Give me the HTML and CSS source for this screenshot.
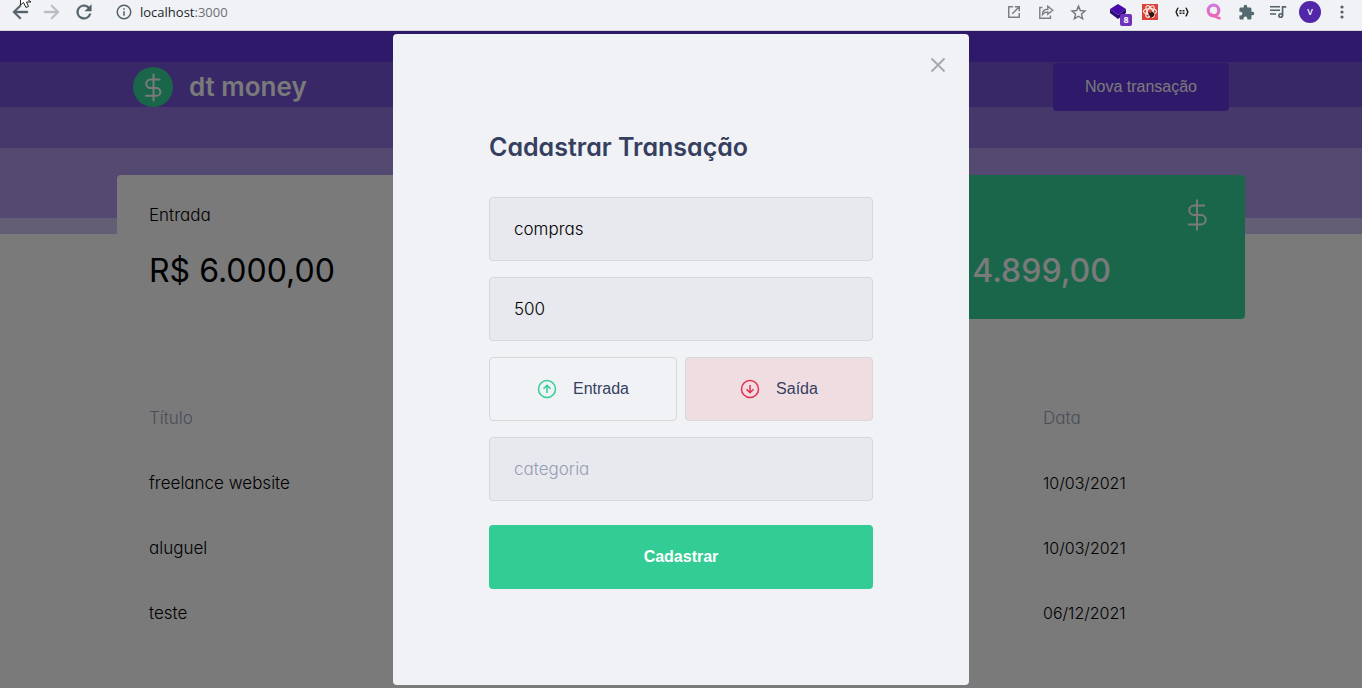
FILE: index.html
```html
<!DOCTYPE html>
<html lang="pt-BR">
<head>
<meta charset="utf-8">
<title>dt money</title>
<link rel="stylesheet" href="styles.css">
</head>
<body>
<div class="browser-bar">
  <div class="nav-tools">
    <button class="tool" aria-label="Voltar"><svg width="24" height="24" viewBox="0 0 24 24"><path d="M20.500 11H7.800l5.600-5.600L12 4l-8 8 8 8 1.400-1.400L7.800 13h12.700z" fill="#536168" stroke="#536168" stroke-width=".5"/></svg></button>
    <button class="tool" aria-label="Avançar"><svg width="24" height="24" viewBox="0 0 24 24"><path d="M3.500 11h12.700l-5.600-5.600L12 4l8 8-8 8-1.400-1.400 5.600-5.600H3.500z" fill="#b9bcbf" stroke="#b9bcbf" stroke-width=".5"/></svg></button>
    <button class="tool" aria-label="Recarregar"><svg width="22" height="22" viewBox="0 0 24 24"><path d="M17.650 6.350A8 8 0 1 0 19.730 14h-2.080A6 6 0 1 1 12 6c1.660 0 3.140.69 4.220 1.780L13 11h7V4z" fill="#536168" stroke="#536168" stroke-width=".5"/></svg></button>
  </div>
  <div class="address">
    <svg width="18" height="18" viewBox="0 0 24 24"><path d="M11 7h2v2h-2zm0 4h2v6h-2zm1-9a10 10 0 1 0 0 20 10 10 0 0 0 0-20zm0 18a8 8 0 1 1 0-16 8 8 0 0 1 0 16z" fill="#536168"/></svg>
    <span class="url">localhost<span class="port">:3000</span></span>
  </div>
  <div class="extensions">
    <div class="page-actions">
      <button class="tool" aria-label="Abrir"><svg width="14" height="14" viewBox="0 0 16 16" fill="none" stroke="#7d8082" stroke-width="1.700"><path d="M7 2H2v12h12V9M9 2h5v5M14 2L6 10"/></svg></button>
      <button class="tool" aria-label="Compartilhar"><svg width="16" height="16" viewBox="0 0 18 18" fill="none" stroke="#7d8082" stroke-width="1.600"><path d="M5 4H2v12h12v-3M5 12c0-4 2-6 6-6V2.500l5.500 4.500-5.500 4.500V9c-3 0-4.500 1-6 3z"/></svg></button>
      <button class="tool" aria-label="Favoritos"><svg width="17" height="17" viewBox="0 0 24 24" fill="none" stroke="#747779" stroke-width="2"><path d="M12 3l2.600 6.200 6.700.6-5.100 4.400 1.600 6.600-5.800-3.500-5.800 3.500 1.600-6.600-5.100-4.400 6.700-.6z"/></svg></button>
    </div>
    <button class="tool tool-badged" aria-label="Camadas"><svg width="18" height="18" viewBox="0 0 18 18"><path d="M9 1l8 5-8 6-8-6z" fill="#480bab"/><path d="M1 6l8 6 8-6v4l-8 6-8-6z" fill="#2b0b73"/></svg><span class="badge">8</span></button>
    <button class="tool" aria-label="React"><svg width="16" height="16" viewBox="0 0 16 16"><path d="M0 0h16v16H0z" fill="#d9453c"/><g fill="none" stroke="#fff0e8" stroke-width="1.100"><ellipse cx="8" cy="7.500" rx="6.500" ry="2.700"/><ellipse cx="8" cy="7.500" rx="6.500" ry="2.700" transform="rotate(60 8 7.500)"/><ellipse cx="8" cy="7.500" rx="6.500" ry="2.700" transform="rotate(120 8 7.500)"/></g><path d="M6 8l2.500 1L10 7.500l2.500 2L12 12l-3 2-2-3z" fill="#2c1919"/></svg></button>
    <button class="tool" aria-label="JSON"><svg width="16" height="16" viewBox="0 0 16 16" fill="none" stroke="#222" stroke-width="1.500"><path d="M4.500 4C2.500 4 3.500 8 1.500 8c2 0 1 4 3 4M11.500 4c2 0 1 4 3 4-2 0-1 4-3 4"/><path d="M5.500 6.700h5M5.500 9.300h5" stroke-dasharray="2 1"/></svg></button>
    <button class="tool" aria-label="Q"><svg width="16" height="18" viewBox="0 0 16 18" fill="none" stroke="url(#pink)"><defs><linearGradient id="pink" gradientUnits="userSpaceOnUse" x1="8" y1="1" x2="8" y2="17"><stop stop-color="#cc7be0"/><stop offset="1" stop-color="#f163aa"/></linearGradient></defs><ellipse cx="7.500" cy="7.500" rx="5.300" ry="5.300" stroke-width="3.200"/><path d="M5 11.500c3.500 0 5 4.500 9.500 3.500" stroke-width="2.600"/></svg></button>
    <button class="tool" aria-label="Extensões"><svg width="17" height="17" viewBox="0 0 24 24"><path d="M20.500 11H19V7a2 2 0 0 0-2-2h-4V3.500a2.500 2.500 0 0 0-5 0V5H4a2 2 0 0 0-2 2v3.800h1.500a2.700 2.700 0 0 1 0 5.400H2V20c0 1.100.9 2 2 2h3.800v-1.500a2.700 2.700 0 0 1 5.400 0V22H17a2 2 0 0 0 2-2v-4h1.500a2.500 2.500 0 0 0 0-5z" fill="#536a70"/></svg></button>
    <button class="tool" aria-label="Mídia"><svg width="18" height="18" viewBox="0 0 18 18"><path d="M1 3h10v1.500H1zm0 3.600h10v1.500H1zm0 3.600h6v1.500H1z" fill="#536168"/><circle cx="11.700" cy="12.500" r="1.800" fill="none" stroke="#536168" stroke-width="1.600"/><path d="M12.700 12.500V3h4.500v1.800h-2.800v7.700z" fill="#536168"/></svg></button>
    <button class="avatar" aria-label="Perfil">V</button>
    <button class="tool" aria-label="Menu"><svg width="18" height="18" viewBox="0 0 18 18" fill="#536168"><circle cx="9" cy="4" r="1.600"/><circle cx="9" cy="9" r="1.600"/><circle cx="9" cy="14" r="1.600"/></svg></button>
  </div>
  <svg class="cursor" width="14" height="8" viewBox="0 0 14 8"><path d="M1.500-6v11L4.500 2.500 7 7.500l2.500-1L7.500 2H12z" fill="#fff" stroke="#222"/></svg>
</div>

<div class="app">
  <header class="header">
    <div class="header-content">
      <a class="brand" href="#">
        <svg width="40" height="40" viewBox="0 0 40 40"><circle cx="20" cy="20" r="20" fill="#33cc95"/><path d="M20.500 7.500v26M26.500 12.500h-9a4.200 4.200 0 0 0 0 8.500h6a3.900 3.900 0 0 1 0 7.800H13" fill="none" stroke="#f4f4f4" stroke-width="2" stroke-linecap="round"/></svg>
        <span class="brand-name">dt money</span>
      </a>
      <button class="new-button">Nova transação</button>
    </div>
  </header>
  <main class="main">
    <section class="summary">
      <article class="card">
        <div class="card-head">Entrada</div>
        <strong class="card-value">R$ 6.000,00</strong>
      </article>
      <article class="card"></article>
      <article class="card card-total">
        <div class="card-head"><svg width="32" height="32" viewBox="0 0 32 32" fill="none" stroke="#f4f4f4" stroke-width="2"><path d="M16 .5v31M24 6.500h-11a4.500 4.500 0 0 0 0 9.500h7a4.700 4.700 0 0 1 0 9.500H7"/></svg></div>
        <strong class="card-value">R$ 4.899,00</strong>
      </article>
    </section>
    <table class="transactions">
      <thead><tr><th>Título</th><th class="date">Data</th></tr></thead>
      <tbody>
        <tr><td>freelance website</td><td class="date">10/03/2021</td></tr>
        <tr><td>aluguel</td><td class="date">10/03/2021</td></tr>
        <tr><td>teste</td><td class="date">06/12/2021</td></tr>
      </tbody>
    </table>
  </main>
  <div class="overlay">
    <form class="modal" role="dialog" aria-labelledby="modal-title">
      <button class="close" type="button" aria-label="Fechar"><svg width="16" height="16" viewBox="0 0 16 16" fill="none" stroke="#a7a8b3" stroke-width="2"><path d="M1.500 1.500l13 13M14.500 1.500l-13 13"/></svg></button>
      <h2 class="modal-title" id="modal-title">Cadastrar Transação</h2>
      <div class="fields">
        <input class="field" type="text" aria-label="Título" value="compras">
        <input class="field" type="text" inputmode="numeric" aria-label="Valor" value="500">
        <div class="types">
          <button class="type" type="button"><svg width="20" height="20" viewBox="0 0 20 20" fill="none" stroke="#33cc95" stroke-width="1.500"><circle cx="10" cy="10" r="8.500"/><path d="M10 14V6.500M6.500 9.700L10 6.200l3.500 3.500"/></svg>Entrada</button>
          <button class="type type-out" type="button"><svg width="20" height="20" viewBox="0 0 20 20" fill="none" stroke="#e52e4d" stroke-width="1.500"><circle cx="10" cy="10" r="8.500"/><path d="M10 6v7.500M6.500 10.300l3.500 3.500 3.500-3.500"/></svg>Saída</button>
        </div>
        <input class="field" type="text" aria-label="Categoria" placeholder="categoria">
      </div>
      <button class="submit" type="submit">Cadastrar</button>
    </form>
  </div>
</div>
</body>
</html>
```
FILE: styles.css
```css
* { box-sizing: border-box; margin: 0; padding: 0; }

body {
  display: flex;
  flex-direction: column;
  height: 100vh;
  overflow: hidden;
  background: #f4f4f4;
  color: #000;
  font-family: Inter, "Open Sans", sans-serif;
  font-size: 17px;
  font-feature-settings: "cv11";
}

button { border: 0; background: none; cursor: pointer; }
svg { display: block; flex: none; }

/* Browser toolbar */
.browser-bar {
  position: relative;
  display: flex;
  align-items: center;
  flex: none;
  height: 31px;
  padding: 0 8px;
  padding-bottom: 6px;
  background: #f0f2f6;
  border-bottom: 1px solid #d4d6d8;
}
.nav-tools { display: flex; gap: 8px; }
.tool {
  display: flex;
  align-items: center;
  justify-content: center;
  width: 24px;
  height: 24px;
}
.nav-tools svg { width: 22px; height: 22px; }
.address { display: flex; flex: 1; align-items: center; gap: 7px; margin-left: 19px; }
.url { font-family: "Open Sans", sans-serif; font-size: 13px; line-height: 18px; color: #222629; }
.port { color: #6c7072; }
.extensions,
.page-actions { display: flex; align-items: center; gap: 8px; }
.page-actions { margin-right: 8px; }
.tool-badged { position: relative; }
.badge {
  position: absolute;
  left: 14px;
  top: 14px;
  width: 12px;
  height: 12px;
  border-radius: 2px;
  background: #6d31bd;
  color: #fff;
  font: bold 9px/12px "Open Sans", sans-serif;
  text-align: center;
}
.avatar {
  width: 22px;
  height: 22px;
  margin: 0 1px;
  border-radius: 50%;
  background: #5127a8;
  color: #fff;
  font: 600 9px/22px "Open Sans", sans-serif;
}
.cursor { position: absolute; left: 19px; top: 0; }

/* Page behind the dialog */
.app { position: relative; flex: 1; min-height: 0; overflow: hidden; }
.header {
  padding: 32px 16px 123px;
  background: linear-gradient(
    #5e32d6 31px, #7250ce 31px 76px, #8c70d6 76px 117px,
    #a892e0 117px 187px, #c6baea 187px);
}
.header-content {
  display: flex;
  align-items: center;
  justify-content: space-between;
  max-width: 1096px;
  margin: 0 auto;
}
.brand { display: flex; align-items: center; gap: 16px; color: #f4f4f4; text-decoration: none; }
.brand-name { font-size: 26px; font-weight: 600; line-height: 32px; }
.new-button {
  height: 48px;
  padding: 0 32px;
  border-radius: 4px;
  background: #5e32d6;
  color: #f4f4f4;
  font: 16px "Liberation Sans", Arial, sans-serif;
}
.main { max-width: 1128px; margin: -59px auto 0; }
.summary { display: grid; grid-template-columns: repeat(3, 1fr); gap: 32px; }
.card {
  height: 144px;
  padding: 24px 32px;
  border-radius: 4px;
  background: #f4f4f4;
}
.card-head { display: flex; align-items: center; height: 32px; font-weight: 300; }
.card-value { display: block; margin-top: 16px; font-size: 32px; font-weight: 400; line-height: 48px; }
.card-total { background: #33cc95; color: #f4f4f4; }
.card-total .card-head { justify-content: flex-end; }
.card-total .card-value { font-weight: 500; }
.transactions { width: 100%; margin-top: 66px; border-collapse: collapse; }
.transactions th,
.transactions td {
  height: 65px;
  padding: 0 32px;
  font-weight: 300;
  line-height: 24px;
  text-align: left;
}
.transactions th { color: #969cb3; }
.transactions .date { width: 234px; }
.transactions td.date { font-size: 16px; }

/* Dialog */
.overlay {
  position: absolute;
  inset: 0;
  display: flex;
  align-items: center;
  justify-content: center;
  background: rgba(0, 0, 0, .5);
}
.modal {
  position: relative;
  width: 100%;
  max-width: 576px;
  padding: 96px;
  border-radius: 4px;
  background: #f0f2f6;
}
.close { position: absolute; right: 23px; top: 23px; }
.modal-title { margin-bottom: 32px; color: #363f5f; font-size: 25px; font-weight: 600; line-height: 35px; }
.fields { display: grid; gap: 16px; }
.field {
  width: 100%;
  height: 64px;
  padding: 0 24px;
  border: 1px solid #d7d7d7;
  border-radius: 4px;
  background: #e7e9ee;
  color: #000;
  font: 300 17px Inter, "Open Sans", sans-serif;
  font-feature-settings: "cv11";
}
.field::placeholder { color: #969cb3; opacity: 1; }
.types { display: grid; grid-template-columns: 1fr 1fr; gap: 8px; }
.type {
  display: flex;
  align-items: center;
  justify-content: center;
  gap: 16px;
  height: 64px;
  border: 1px solid #d7d7d7;
  border-radius: 4px;
  color: #363f5f;
  font: 16px "Liberation Sans", Arial, sans-serif;
}
.type-out { background: #efdde2; }
.submit {
  width: 100%;
  height: 64px;
  margin-top: 24px;
  border-radius: 4px;
  background: #33cc95;
  color: #fff;
  font: bold 16px "Liberation Sans", Arial, sans-serif;
}
```
